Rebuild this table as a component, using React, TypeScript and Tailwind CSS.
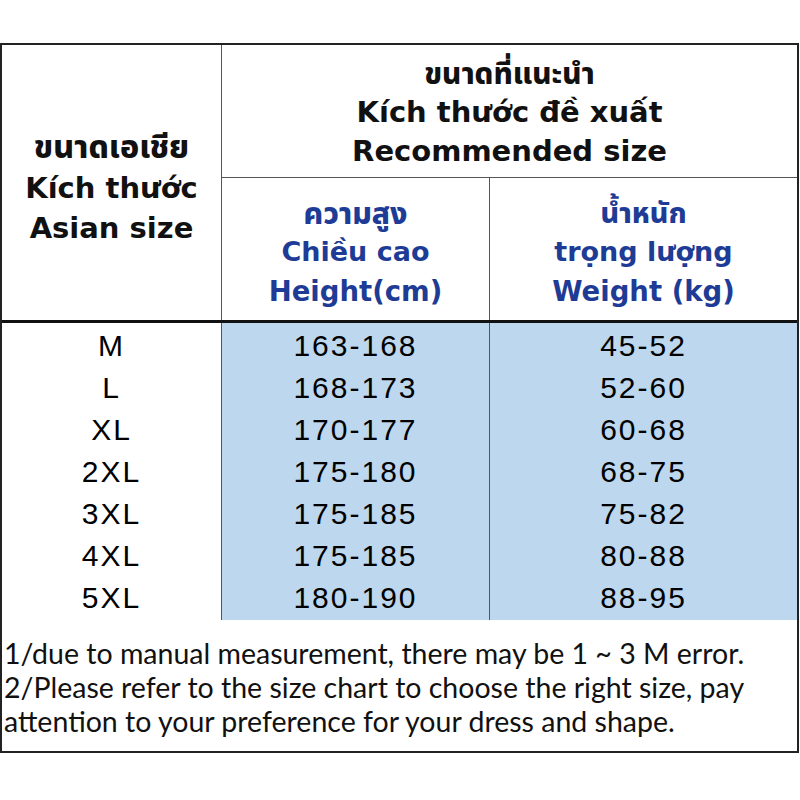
import React from "react"

const rows = [
  { size: "M", height: "163-168", weight: "45-52" },
  { size: "L", height: "168-173", weight: "52-60" },
  { size: "XL", height: "170-177", weight: "60-68" },
  { size: "2XL", height: "175-180", weight: "68-75" },
  { size: "3XL", height: "175-185", weight: "75-82" },
  { size: "4XL", height: "175-185", weight: "80-88" },
  { size: "5XL", height: "180-190", weight: "88-95" },
]

const head = "font-['DejaVu_Sans',Tahoma,sans-serif] font-bold"
const thai = "font-['Noto_Sans_Thai','Noto_Sans',Tahoma,sans-serif] font-extrabold"
const num = "font-['Liberation_Sans',Arial,sans-serif] text-[30px] tracking-[2px] text-black"

export default function App() {
  return (
    <div className="w-[800px] h-[800px] bg-white pt-[43px]">
      <div className="w-[799px] border-2 border-[#222] bg-white">
        <div className="grid grid-cols-[220px_268px_1fr]">
          {/* left header, spans two header rows */}
          <div className="row-span-2 flex flex-col items-center justify-center pt-[10px] border-r border-[#555] text-[#111]">
            <div className={`text-[32px] leading-[40px] ${thai}`}>ขนาดเอเชีย</div>
            <div className={`text-[29px] leading-[40px] ${head}`}>Kích thước</div>
            <div className={`text-[29px] leading-[40px] ${head}`}>Asian size</div>
          </div>
          <div className="col-span-2 h-[133px] flex flex-col items-center justify-center pt-[6px] border-b border-[#555] text-[#111]">
            <div className={`text-[29.5px] leading-[36px] ${thai}`}>ขนาดที่แนะนำ</div>
            <div className={`text-[29px] leading-[38px] ${head}`}>Kích thước đề xuất</div>
            <div className={`text-[29px] leading-[40px] ${head}`}>Recommended size</div>
          </div>
          <div className="h-[142px] flex flex-col items-center justify-center pt-[10px] border-r border-[#555] text-[#1e3c96]">
            <div className={`text-[30px] leading-[36px] ${thai}`}>ความสูง</div>
            <div className={`text-[27px] leading-[38px] ${head}`}>Chiều cao</div>
            <div className={`text-[27.5px] leading-[40px] ${head}`}>Height(cm)</div>
          </div>
          <div className="h-[142px] flex flex-col items-center justify-center pt-[10px] text-[#1e3c96]">
            <div className={`text-[28.5px] leading-[36px] ${thai}`}>น้ำหนัก</div>
            <div className={`text-[27px] leading-[38px] ${head}`}>trọng lượng</div>
            <div className={`text-[27.5px] leading-[40px] ${head}`}>Weight (kg)</div>
          </div>
        </div>

        <div className="border-t-[3px] border-[#111]">
          {rows.map((r, i) => (
            <div
              key={r.size}
              className={`grid grid-cols-[220px_268px_1fr] h-[42px] ${i < rows.length - 1 ? "border-b border-[#555]" : "border-b-2 border-[#555]"}`}
            >
              <div className={`flex items-center justify-center border-r border-[#555] bg-white ${num}`}>{r.size}</div>
              <div className={`flex items-center justify-center border-r border-[#555] bg-[#bdd7ee] ${num}`}>{r.height}</div>
              <div className={`flex items-center justify-center bg-[#bdd7ee] ${num}`}>{r.weight}</div>
            </div>
          ))}
        </div>

        <div className="h-[134px] px-[2px] pt-[19px] font-['Lato',Calibri,sans-serif] text-[28.5px] leading-[34px] text-[#111]">
          <div>1/due to manual measurement, there may be 1 ~ 3 M error.</div>
          <div>2/Please refer to the size chart to choose the right size, pay</div>
          <div>attention to your preference for your dress and shape.</div>
        </div>
      </div>
    </div>
  )
}
